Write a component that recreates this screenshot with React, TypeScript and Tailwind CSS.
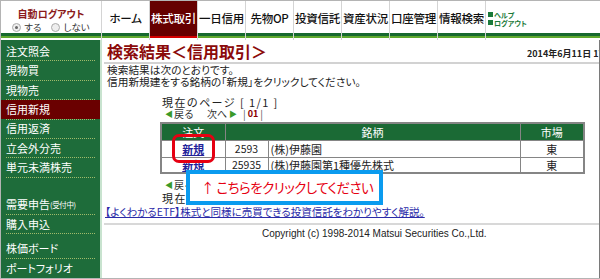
import React from "react";

const tabs = ["ホーム", "株式取引", "一日信用", "先物OP", "投資信託", "資産状況", "口座管理", "情報検索"];
const menuMain = ["注文照会", "現物買", "現物売", "信用新規", "信用返済", "立会外分売", "単元未満株売"];

function Stripes({ active }: { active?: boolean }) {
  return (
    <div className="flex flex-col">
      <div className={active ? "h-[3px] bg-[#660000]" : "h-[3px] bg-[#17692f]"} />
      <div className={active ? "h-[2px] bg-[#d40000]" : "h-[2px] bg-[#5fa82e]"} />
      <div className="h-[2px] bg-white" />
    </div>
  );
}

function SideItem({ label, active, sep = true, sub }: { label: string; active?: boolean; sep?: boolean; sub?: string }) {
  return (
    <div className="h-[19.5px] flex flex-col">
      <div
        className={
          active
            ? "flex-1 flex items-center pl-[5px] text-[11px] text-white bg-[#6a0000]"
            : "flex-1 flex items-center pl-[5px] text-[11px] text-white"
        }
      >
        {label}
        {sub && <span className="text-[7.5px] tracking-tighter">{sub}</span>}
      </div>
      {sep && <div className="mx-[5px] border-b border-dotted border-[#a0bb6a]" />}
    </div>
  );
}

function PageNav() {
  return (
    <div className="h-[12px] flex items-center text-[10px] leading-[12px] text-[#333] pl-[5px] [font-feature-settings:normal]">
      <span className="text-[#3a9a2a] text-[8px]">◀</span>
      <span className="ml-[1px]">戻る</span>
      <span className="ml-[13px]">次へ</span>
      <span className="text-[#3a9a2a] text-[8px] ml-[2px]">▶</span>
      <span className="ml-[6px] text-[#555]">|</span>
      <span className="ml-[2px] font-bold text-[#8b0000] text-[9px]">01</span>
      <span className="ml-[2px] text-[#555]">|</span>
    </div>
  );
}

function CurrentPage({ mt }: { mt: string }) {
  return (
    <div className={mt + " h-[12px] pl-[2px] text-[11px] leading-[12px] tracking-[1.4px] text-[#222] whitespace-nowrap [font-feature-settings:normal]"}>
      現在のページ [ 1/1 ]
    </div>
  );
}

export default function App() {
  return (
    <div className="w-[600px] h-[279px] overflow-hidden bg-white border-t border-l border-b border-[#b4b4b4] flex flex-col font-['Noto_Sans_CJK_JP',sans-serif] [font-feature-settings:'palt']">
      {/* header */}
      <div className="flex h-[39px]">
        <div className="w-[101px] border-r border-[#d4d4d4] flex flex-col">
          <div className="h-[32px] flex flex-col items-center pt-[6px]">
            <div className="text-[10px] leading-[13px] font-bold text-[#8b1a1a]">自動ログアウト</div>
            <div className="flex items-center text-[9.5px] leading-[12px] text-[#333] mt-[1px]">
              <span className="w-[9px] h-[9px] rounded-full border border-[#aaa] bg-[#eee] flex items-center justify-center">
                <span className="w-[3px] h-[3px] rounded-full bg-[#666]" />
              </span>
              <span className="ml-[3px]">する</span>
              <span className="ml-[10px] w-[9px] h-[9px] rounded-full border border-[#aaa] bg-[#eee]" />
              <span className="ml-[3px]">しない</span>
            </div>
          </div>
          <Stripes />
        </div>
        {tabs.map((t) => {
          const active = t === "株式取引";
          return (
            <div key={t} className="w-[48px] border-r border-[#d4d4d4] flex flex-col">
              <div
                className={
                  active
                    ? "h-[32px] flex items-center justify-center pt-[4px] text-[11.5px] font-medium text-white bg-[#660000] tracking-tight"
                    : "h-[32px] flex items-center justify-center pt-[4px] text-[11.5px] font-medium text-[#111] tracking-tight"
                }
              >
                {t}
              </div>
              <Stripes active={active} />
            </div>
          );
        })}
        <div className="flex-1 flex flex-col">
          <div className="h-[32px] flex flex-col justify-center pl-[2px] pt-[3px] text-[7px] leading-[8px] font-bold text-[#1b7a3a]">
            <div className="flex items-center">
              <span className="w-[5px] h-[5px] bg-[#1b7a3a] mr-[1px]" />
              ヘルプ
            </div>
            <div className="flex items-center">
              <span className="w-[5px] h-[5px] bg-[#1b7a3a] mr-[1px]" />
              ログアウト
            </div>
          </div>
          <Stripes />
        </div>
      </div>

      {/* body */}
      <div className="flex flex-1 min-h-0">
        <div className="w-[99px] bg-[#1e6c3a] flex flex-col pt-[2px]">
          {menuMain.map((m) => (
            <SideItem key={m} label={m} active={m === "信用新規"} />
          ))}
          <div className="h-[18px]" />
          <SideItem label="需要申告" sub="(受付中)" />
          <SideItem label="購入申込" />
          <div className="h-[5px]" />
          <SideItem label="株価ボード" />
          <SideItem label="ポートフォリオ" sep={false} />
        </div>

        <div className="flex-1 min-w-0 border-l-2 border-[#c8e3cf] border-r border-r-[#7a7a7a] pl-[2px] flex flex-col">
          <div className="h-[22px] flex items-center">
            <span className="pl-[3px] text-[16px] leading-[22px] font-bold text-[#8b0a0a]">検索結果＜信用取引＞</span>
            <div className="ml-auto w-[72px] overflow-hidden whitespace-nowrap text-[9px] font-bold text-[#222] pt-[5px]">
              2014年6月11日 17:05
            </div>
          </div>
          <div className="h-[2px] bg-[#d2d2d2]" />
          <div className="pl-[3px] text-[10.7px] leading-[12px] text-[#222] whitespace-nowrap">
            <div>検索結果は次のとおりです。</div>
            <div>信用新規建をする銘柄の「新規」をクリックしてください。</div>
          </div>

          <div className="ml-[56px] w-[425px] flex flex-col relative">
            <CurrentPage mt="mt-[8px]" />
            <PageNav />
            <table className="mt-[2px] w-[425px] border-collapse border-2 border-[#858585] text-[11px] leading-[14px] text-[#222]">
              <thead>
                <tr className="h-[17px] bg-[#1b6a35] text-white">
                  <th className="w-[64px] border border-[#858585] font-normal">注文</th>
                  <th colSpan={2} className="border border-[#858585] font-normal">銘柄</th>
                  <th className="w-[64px] border border-[#858585] font-normal">市場</th>
                </tr>
              </thead>
              <tbody>
                <tr className="h-[17px]">
                  <td className="border border-[#858585] text-center font-bold text-[11px] text-[#22229a] underline">新規</td>
                  <td className="w-[43px] border border-[#858585] text-center text-[10.5px]">2593</td>
                  <td className="border border-[#858585] pl-[2px]">(株)伊藤園</td>
                  <td className="border border-[#858585] text-center">東</td>
                </tr>
                <tr className="h-[16px]">
                  <td className="border border-[#858585] text-center font-bold text-[11px] text-[#22229a] underline">新規</td>
                  <td className="border border-[#858585] text-center text-[10.5px]">25935</td>
                  <td className="border border-[#858585] pl-[2px]">(株)伊藤園第1種優先株式</td>
                  <td className="border border-[#858585] text-center">東</td>
                </tr>
              </tbody>
            </table>
            <div className="mt-[5px]">
              <PageNav />
            </div>
            <CurrentPage mt="mt-[1px]" />

            {/* annotations */}
            <div className="absolute left-[12px] top-[46px] w-[43px] h-[29px] border-[3px] border-[#e60012] rounded-[7px] z-10" />
            <div className="absolute left-[26px] top-[82px] w-[197px] h-[35px] overflow-hidden border-[4px] border-[#0a9bef] bg-white z-10 flex items-center pl-[11px] text-[13.5px] tracking-[-0.04em] text-[#e60012] whitespace-nowrap">
              ↑ こちらをクリックしてください
            </div>
          </div>

          <div className="mt-[2px] h-[12px] pl-[1px] text-[10.5px] leading-[12px] text-[#2a2aa8] underline whitespace-nowrap">
            【よくわかるETF】株式と同様に売買できる投資信託をわかりやすく解説。
          </div>
          <div className="mt-[5px] h-[2px] bg-[#d8d8d8]" />
          <div className="mt-[3px] h-[12px] pl-[158px] text-[10px] leading-[12px] text-[#222] font-['Liberation_Sans',sans-serif] whitespace-nowrap">
            Copyright (c) 1998-2014 Matsui Securities Co.,Ltd.
          </div>
        </div>
      </div>
    </div>
  );
}
